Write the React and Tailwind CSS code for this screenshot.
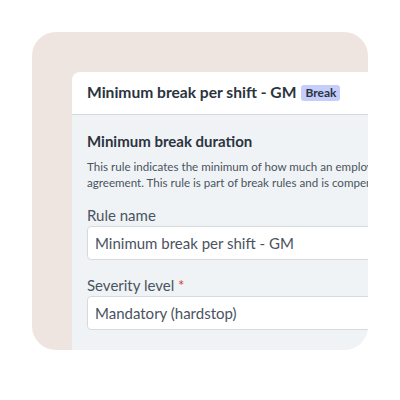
import React from 'react';

export default function App() {
  return (
    <div className="w-[400px] h-[400px] bg-white" style={{ fontFamily: 'Lato, "Noto Sans", sans-serif' }}>
      <div className="pt-8 pl-8">
        <div className="w-[336px] h-[318px] rounded-[24px] bg-[#efe5e0] overflow-hidden pt-10 pl-10">
          <div className="w-[340px] rounded-tl-lg bg-white overflow-hidden">
            {/* header */}
            <div className="h-[43px] px-[15px] flex items-center gap-[5px] border-b border-[#d5dadd]">
              <span className="text-[15.6px] font-bold text-[#2b3440]">Minimum break per shift - GM</span>
              <span className="px-[4px] h-[16px] flex items-center rounded-[3px] bg-[#c5cdfa] text-[12px] font-bold text-[#2b3440]">Break</span>
            </div>
            {/* body */}
            <div className="bg-[#f0f3f5] px-[15px] pt-[16px] pb-[30px] h-[300px]">
              <div className="text-[15px] font-bold text-[#2b3440] leading-[20px]">Minimum break duration</div>
              <p className="mt-[8px] text-[11.6px] leading-[16px] text-[#4a5360] whitespace-nowrap">
                This rule indicates the minimum of how much an employee should take a break according to the
                <br />
                agreement. This rule is part of break rules and is compensated.
              </p>
              <div className="mt-[14px] text-[15px] text-[#4a5360] leading-[20px]">Rule name</div>
              <div className="mt-[1px] h-[34px] rounded-[4px] border border-[#d5dadd] bg-white flex items-center px-[7px] text-[15px] text-[#4a5360] whitespace-nowrap">
                Minimum break per shift - GM
              </div>
              <div className="mt-[15px] text-[15px] text-[#4a5360] leading-[20px]">
                Severity level <span className="text-[#d33a3a]">*</span>
              </div>
              <div className="mt-[1px] h-[34px] rounded-[4px] border border-[#d5dadd] bg-white flex items-center px-[7px] text-[15px] text-[#4a5360] whitespace-nowrap">
                Mandatory (hardstop)
              </div>
            </div>
          </div>
        </div>
      </div>
    </div>
  );
}
